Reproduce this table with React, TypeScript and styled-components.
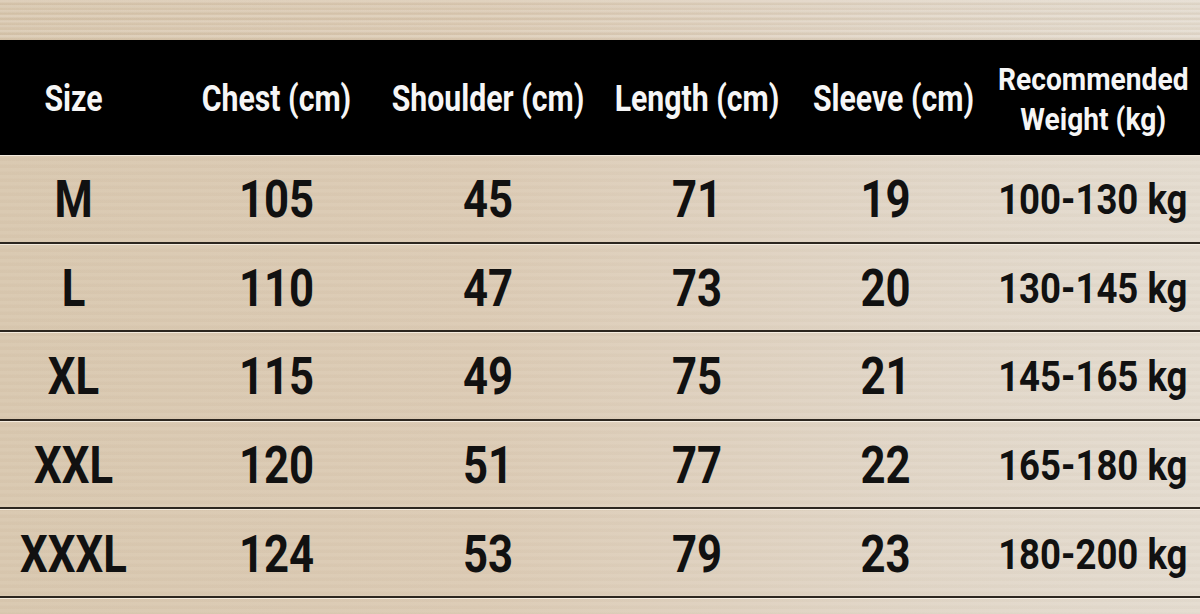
import styled, { createGlobalStyle } from 'styled-components';

const GlobalStyle = createGlobalStyle`
  html, body {
    margin: 0;
    padding: 0;
  }
  body {
    font-family: Roboto, 'Liberation Sans', sans-serif;
    font-weight: 700;
  }
`;

type Row = {
  size: string;
  chest: number;
  shoulder: number;
  length: number;
  sleeve: number;
  weight: string;
};

const rows: Row[] = [
  { size: 'M', chest: 105, shoulder: 45, length: 71, sleeve: 19, weight: '100-130 kg' },
  { size: 'L', chest: 110, shoulder: 47, length: 73, sleeve: 20, weight: '130-145 kg' },
  { size: 'XL', chest: 115, shoulder: 49, length: 75, sleeve: 21, weight: '145-165 kg' },
  { size: 'XXL', chest: 120, shoulder: 51, length: 77, sleeve: 22, weight: '165-180 kg' },
  { size: 'XXXL', chest: 124, shoulder: 53, length: 79, sleeve: 23, weight: '180-200 kg' },
];

// horizontal nudge per column so text centres land where the chart puts them
const headNudges = [-14, -2, 1, 5, 4, -2];
const cellNudges = [-14, -2, 1, 5, -4, -3];

const SizeChart = () => {
  return (
    <Page>
      <GlobalStyle />
      <TopStrip />
      <HeaderRow>
        <HeadCell $nudge={headNudges[0]}>Size</HeadCell>
        <HeadCell $nudge={headNudges[1]}>Chest (cm)</HeadCell>
        <HeadCell $nudge={headNudges[2]}>Shoulder (cm)</HeadCell>
        <HeadCell $nudge={headNudges[3]}>Length (cm)</HeadCell>
        <HeadCell $nudge={headNudges[4]}>Sleeve (cm)</HeadCell>
        <HeadCell $nudge={headNudges[5]} $small>
          Recommended
          <br />
          Weight (kg)
        </HeadCell>
      </HeaderRow>
      {rows.map((row) => (
        <DataRow key={row.size}>
          <Cell $nudge={cellNudges[0]}>{row.size}</Cell>
          <Cell $nudge={cellNudges[1]}>{row.chest}</Cell>
          <Cell $nudge={cellNudges[2]}>{row.shoulder}</Cell>
          <Cell $nudge={cellNudges[3]}>{row.length}</Cell>
          <Cell $nudge={cellNudges[4]}>{row.sleeve}</Cell>
          <Cell $nudge={cellNudges[5]} $small>
            {row.weight}
          </Cell>
        </DataRow>
      ))}
    </Page>
  );
};

const Page = styled.div`
  width: 1200px;
  height: 614px;
  overflow: hidden;
  background:
    repeating-linear-gradient(
      180deg,
      rgba(255, 255, 255, 0.03) 0px,
      rgba(255, 255, 255, 0.03) 3px,
      rgba(120, 95, 60, 0.025) 4px,
      rgba(120, 95, 60, 0.025) 7px
    ),
    linear-gradient(90deg, #d9c8b0 0%, #dccbb5 40%, #e1d6c7 75%, #e4dcd0 100%);
`;

const TopStrip = styled.div`
  height: 40px;
  background: repeating-linear-gradient(
    180deg,
    rgba(255, 255, 255, 0.1) 0px,
    rgba(255, 255, 255, 0.1) 2px,
    rgba(150, 120, 80, 0.07) 3px,
    rgba(150, 120, 80, 0.07) 5px
  );
`;

const Grid = styled.div`
  display: grid;
  grid-template-columns: 175px 207px 210px 200px 195px 1fr;
  align-items: center;
`;

const HeaderRow = styled(Grid)`
  height: 115px;
  background: #000;
  color: #f6f6f6;
  box-shadow: 0 1px 0 #f2e9dc;
`;

const HeadCell = styled.div<{ $nudge: number; $small?: boolean }>`
  display: flex;
  justify-content: center;
  text-align: center;
  transform: translateX(${(p) => p.$nudge}px) scaleX(${(p) => (p.$small ? 0.88 : 0.84)});
  font-size: ${(p) => (p.$small ? '32px' : '36px')};
  line-height: 40px;
  white-space: nowrap;
  padding-top: 2px;
`;

const DataRow = styled(Grid)`
  box-sizing: border-box;
  height: 88.6px;
  border-bottom: 2px solid #2c261f;
  box-shadow: 0 1px 0 rgba(255, 250, 240, 0.7);
  color: #111;
`;

const Cell = styled.div<{ $nudge: number; $small?: boolean }>`
  display: flex;
  justify-content: center;
  transform: translateX(${(p) => p.$nudge}px) scaleX(${(p) => (p.$small ? 0.87 : 0.84)});
  font-size: ${(p) => (p.$small ? '42px' : '52px')};
  line-height: 1;
  white-space: nowrap;
  padding-top: 4px;
`;

export default SizeChart;
